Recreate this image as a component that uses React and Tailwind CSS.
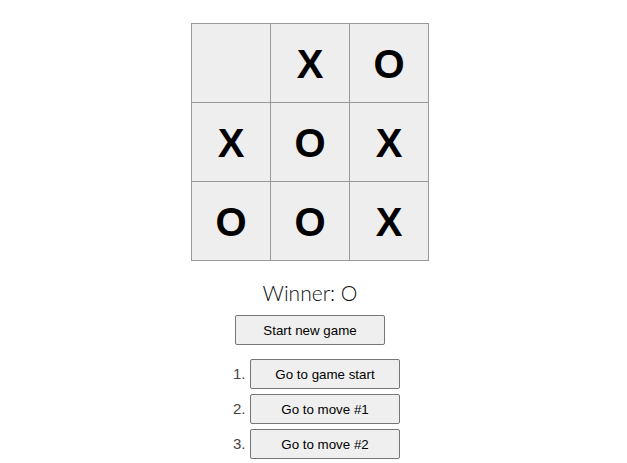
const squares = [null, 'X', 'O', 'X', 'O', 'X', 'O', 'O', 'X'];
const moves = ['Go to game start', 'Go to move #1', 'Go to move #2'];

function Square({ value }) {
    return (
        <div className="w-[78px] h-[78px] bg-[#eeeeee] flex items-center justify-center text-[40px] font-bold text-black font-['Liberation_Sans',Arial,sans-serif] leading-none pt-[2px]">
            {value}
        </div>
    );
}

export default function App() {
    return (
        <div className="w-[620px] flex flex-col items-center pt-[23px] bg-white">
            {/* Board */}
            <div className="grid grid-cols-3 gap-px p-px bg-[#999999]">
                {squares.map((v, i) => (
                    <Square key={i} value={v} />
                ))}
            </div>

            {/* Status */}
            <div className="mt-[18px] h-[28px] leading-[28px] text-[21px] font-light text-[#111] font-['Lato',sans-serif]">
                Winner: O
            </div>

            <button className="mt-2 w-[150px] h-[30px] bg-[#efefef] border border-[#767676] rounded-[2px] text-[13.33px] text-black font-['Liberation_Sans',Arial,sans-serif] pt-px">
                Start new game
            </button>

            {/* Move history */}
            <ol className="mt-[14px] flex flex-col gap-[5px] pl-[13px]">
                {moves.map((m, i) => (
                    <li key={i} className="flex items-center gap-[5px]">
                        <span className="w-[12px] text-right text-[15px] text-[#444] font-['Liberation_Sans',Arial,sans-serif]">{i + 1}.</span>
                        <button className="w-[150px] h-[30px] bg-[#efefef] border border-[#767676] rounded-[2px] text-[13.33px] text-black font-['Liberation_Sans',Arial,sans-serif] pt-px">
                            {m}
                        </button>
                    </li>
                ))}
            </ol>
        </div>
    );
}
